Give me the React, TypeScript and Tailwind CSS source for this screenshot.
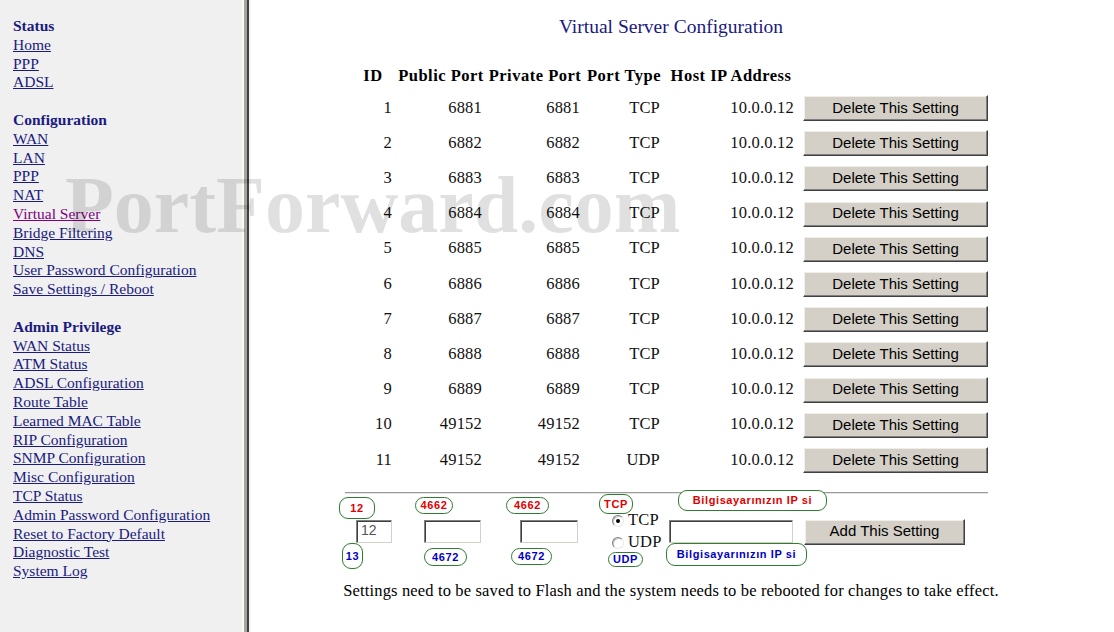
import type { ReactNode } from 'react';

type NavGroup = { title: string; links: string[] };

const navGroups: NavGroup[] = [
  { title: 'Status', links: ['Home', 'PPP', 'ADSL'] },
  {
    title: 'Configuration',
    links: [
      'WAN',
      'LAN',
      'PPP',
      'NAT',
      'Virtual Server',
      'Bridge Filtering',
      'DNS',
      'User Password Configuration',
      'Save Settings / Reboot',
    ],
  },
  {
    title: 'Admin Privilege',
    links: [
      'WAN Status',
      'ATM Status',
      'ADSL Configuration',
      'Route Table',
      'Learned MAC Table',
      'RIP Configuration',
      'SNMP Configuration',
      'Misc Configuration',
      'TCP Status',
      'Admin Password Configuration',
      'Reset to Factory Default',
      'Diagnostic Test',
      'System Log',
    ],
  },
];

type Rule = { id: number; pub: number; priv: number; type: 'TCP' | 'UDP'; host: string };

const rules: Rule[] = [
  ...[6881, 6882, 6883, 6884, 6885, 6886, 6887, 6888, 6889].map((port, i) => ({
    id: i + 1,
    pub: port,
    priv: port,
    type: 'TCP' as const,
    host: '10.0.0.12',
  })),
  { id: 10, pub: 49152, priv: 49152, type: 'TCP', host: '10.0.0.12' },
  { id: 11, pub: 49152, priv: 49152, type: 'UDP', host: '10.0.0.12' },
];

const cols = 'grid grid-cols-[46px_90px_98px_80px_134px_194px]';

function ClassicButton({ children, className }: { children: ReactNode; className: string }) {
  return (
    <button
      className={`flex items-center justify-center border border-t-white border-l-white border-r-[#404040] border-b-[#404040] bg-[#d4d0c8] font-['Liberation_Sans',Arial,sans-serif] text-[15px] tracking-normal text-black shadow-[inset_-1px_-1px_0_#808080,inset_1px_1px_0_#f0eee8] ${className}`}
    >
      {children}
    </button>
  );
}

function TextBox({ className, value }: { className: string; value?: string }) {
  return (
    <div
      className={`h-[23px] border border-t-[#808080] border-l-[#808080] border-r-[#d4d0c8] border-b-[#d4d0c8] bg-white pl-[4px] font-['Liberation_Sans',Arial,sans-serif] text-[14px] leading-[19px] text-[#555] shadow-[inset_1px_1px_0_#404040] ${className}`}
    >
      {value}
    </div>
  );
}

function Radio({ checked, label }: { checked?: boolean; label: string }) {
  return (
    <div className="flex h-[22px] items-center">
      <span className="flex h-[12px] w-[12px] items-center justify-center rounded-full border border-t-[#808080] border-l-[#808080] border-r-[#e8e8e8] border-b-[#e8e8e8] bg-white shadow-[inset_1px_1px_0_#c8c8c8]">
        {checked && <span className="h-[4px] w-[4px] rounded-full bg-black" />}
      </span>
      <span className="ml-[4px] text-[16.5px] tracking-[0.15px]">{label}</span>
    </div>
  );
}

// green-outlined callouts pasted over the form
function Note({
  text,
  tone,
  className,
}: {
  text: string;
  tone: 'red' | 'blue';
  className: string;
}) {
  return (
    <div
      className={`absolute flex items-center justify-center rounded-[9px] border border-[#2f7d2f] bg-white font-['Liberation_Sans',Arial,sans-serif] text-[11px] font-bold tracking-[0.6px] ${
        tone === 'red' ? 'text-[#e00000]' : 'text-[#0000c8]'
      } ${className}`}
    >
      {text}
    </div>
  );
}

export default function App() {
  return (
    <div className="relative flex h-[632px] w-[1114px] overflow-hidden bg-white font-['Liberation_Serif',serif] text-[#111]">
      <aside className="w-[242px] shrink-0 bg-[#f0f0f0] pl-[13px] pt-[17px] text-[15.5px] leading-[18.8px]">
        {navGroups.map((group, gi) => (
          <div key={group.title} className={gi > 0 ? 'mt-[18.8px]' : ''}>
            <div className="font-bold text-[#1a1a80]">{group.title}</div>
            {group.links.map((link) => (
              <div key={link}>
                <a
                  href="#"
                  className={`underline ${link === 'Virtual Server' ? 'text-[#800080]' : 'text-[#1a1a80]'}`}
                >
                  {link}
                </a>
              </div>
            ))}
          </div>
        ))}
      </aside>

      {/* frameset divider */}
      <div className="w-[7px] shrink-0 border-l-2 border-r-2 border-l-[#fbfbf6] border-r-[#404040] bg-[#a6a6a0]" />

      <main className="flex-1 border-l-2 border-[#f5f5f5] pl-[99px] pt-[16px]">
        <div className="w-[642px]">
          <h1 className="text-center text-[19.5px] leading-[22px] text-[#1a1a80]">
            Virtual Server Configuration
          </h1>

          <div className={`${cols} mt-[23.5px] text-[16.5px] tracking-[0.2px]`}>
            {['ID', 'Public Port', 'Private Port', 'Port Type', 'Host IP Address', ''].map((h, i) => (
              <div
                key={i}
                className="flex h-[29px] items-center justify-center whitespace-nowrap font-bold tracking-[0.5px] text-black"
              >
                {h}
              </div>
            ))}
            {rules.map((r) => (
              <div key={r.id} className="contents">
                <div className="flex h-[35.2px] items-center justify-end pr-[4px]">{r.id}</div>
                <div className="flex h-[35.2px] items-center justify-end pr-[4px]">{r.pub}</div>
                <div className="flex h-[35.2px] items-center justify-end pr-[4px]">{r.priv}</div>
                <div className="flex h-[35.2px] items-center justify-end pr-[4px]">{r.type}</div>
                <div className="flex h-[35.2px] items-center justify-end pr-[4px]">{r.host}</div>
                <div className="flex h-[35.2px] items-center pl-[5px]">
                  <ClassicButton className="h-[26px] w-[185px]">Delete This Setting</ClassicButton>
                </div>
              </div>
            ))}
          </div>

          <div className="ml-[-5px] mt-[14px] h-[2px] w-[643px] border-t border-b border-t-[#9a9a9a] border-b-[#e4e4e4]" />

          <div className={`${cols} mt-[16px] h-[44px] items-center`}>
            <div className="pl-[6px]">
              <TextBox className="w-[36px]" value="12" />
            </div>
            <div className="pl-[28px]">
              <TextBox className="w-[57px]" />
            </div>
            <div className="pl-[34px]">
              <TextBox className="w-[58px]" />
            </div>
            <div className="flex flex-col pl-[28px]">
              <Radio checked label="TCP" />
              <Radio label="UDP" />
            </div>
            <div className="pl-[5px]">
              <TextBox className="w-[124px]" />
            </div>
            <div className="pl-[6px]">
              <ClassicButton className="h-[26px] w-[161px]">Add This Setting</ClassicButton>
            </div>
          </div>

          <p className="-mx-[20px] mt-[27px] whitespace-nowrap text-center text-[16.5px] leading-[20px] tracking-[0.15px] text-black">
            Settings need to be saved to Flash and the system needs to be rebooted for changes to take effect.
          </p>
        </div>
      </main>

      <div className="pointer-events-none absolute left-[65px] top-[165px] whitespace-nowrap text-[80px] font-bold leading-none text-black/[0.12]">
        PortForward.com
      </div>

      <Note text="12" tone="red" className="left-[339px] top-[497px] h-[22px] w-[36px]" />
      <Note text="13" tone="blue" className="left-[342px] top-[543px] h-[26px] w-[21px]" />
      <Note text="4662" tone="red" className="left-[415px] top-[497px] h-[17px] w-[38px]" />
      <Note text="4672" tone="blue" className="left-[424px] top-[548px] h-[18px] w-[43px]" />
      <Note text="4662" tone="red" className="left-[506px] top-[497px] h-[17px] w-[43px]" />
      <Note text="4672" tone="blue" className="left-[511px] top-[548px] h-[17px] w-[41px]" />
      <Note text="TCP" tone="red" className="left-[599px] top-[494px] h-[20px] w-[34px]" />
      <Note text="UDP" tone="blue" className="left-[608px] top-[552px] h-[15px] w-[35px]" />
      <Note text="Bilgisayarınızın IP si" tone="red" className="left-[678px] top-[490px] h-[21px] w-[149px]" />
      <Note text="Bilgisayarınızın IP si" tone="blue" className="left-[666px] top-[543px] h-[23px] w-[141px]" />
    </div>
  );
}
